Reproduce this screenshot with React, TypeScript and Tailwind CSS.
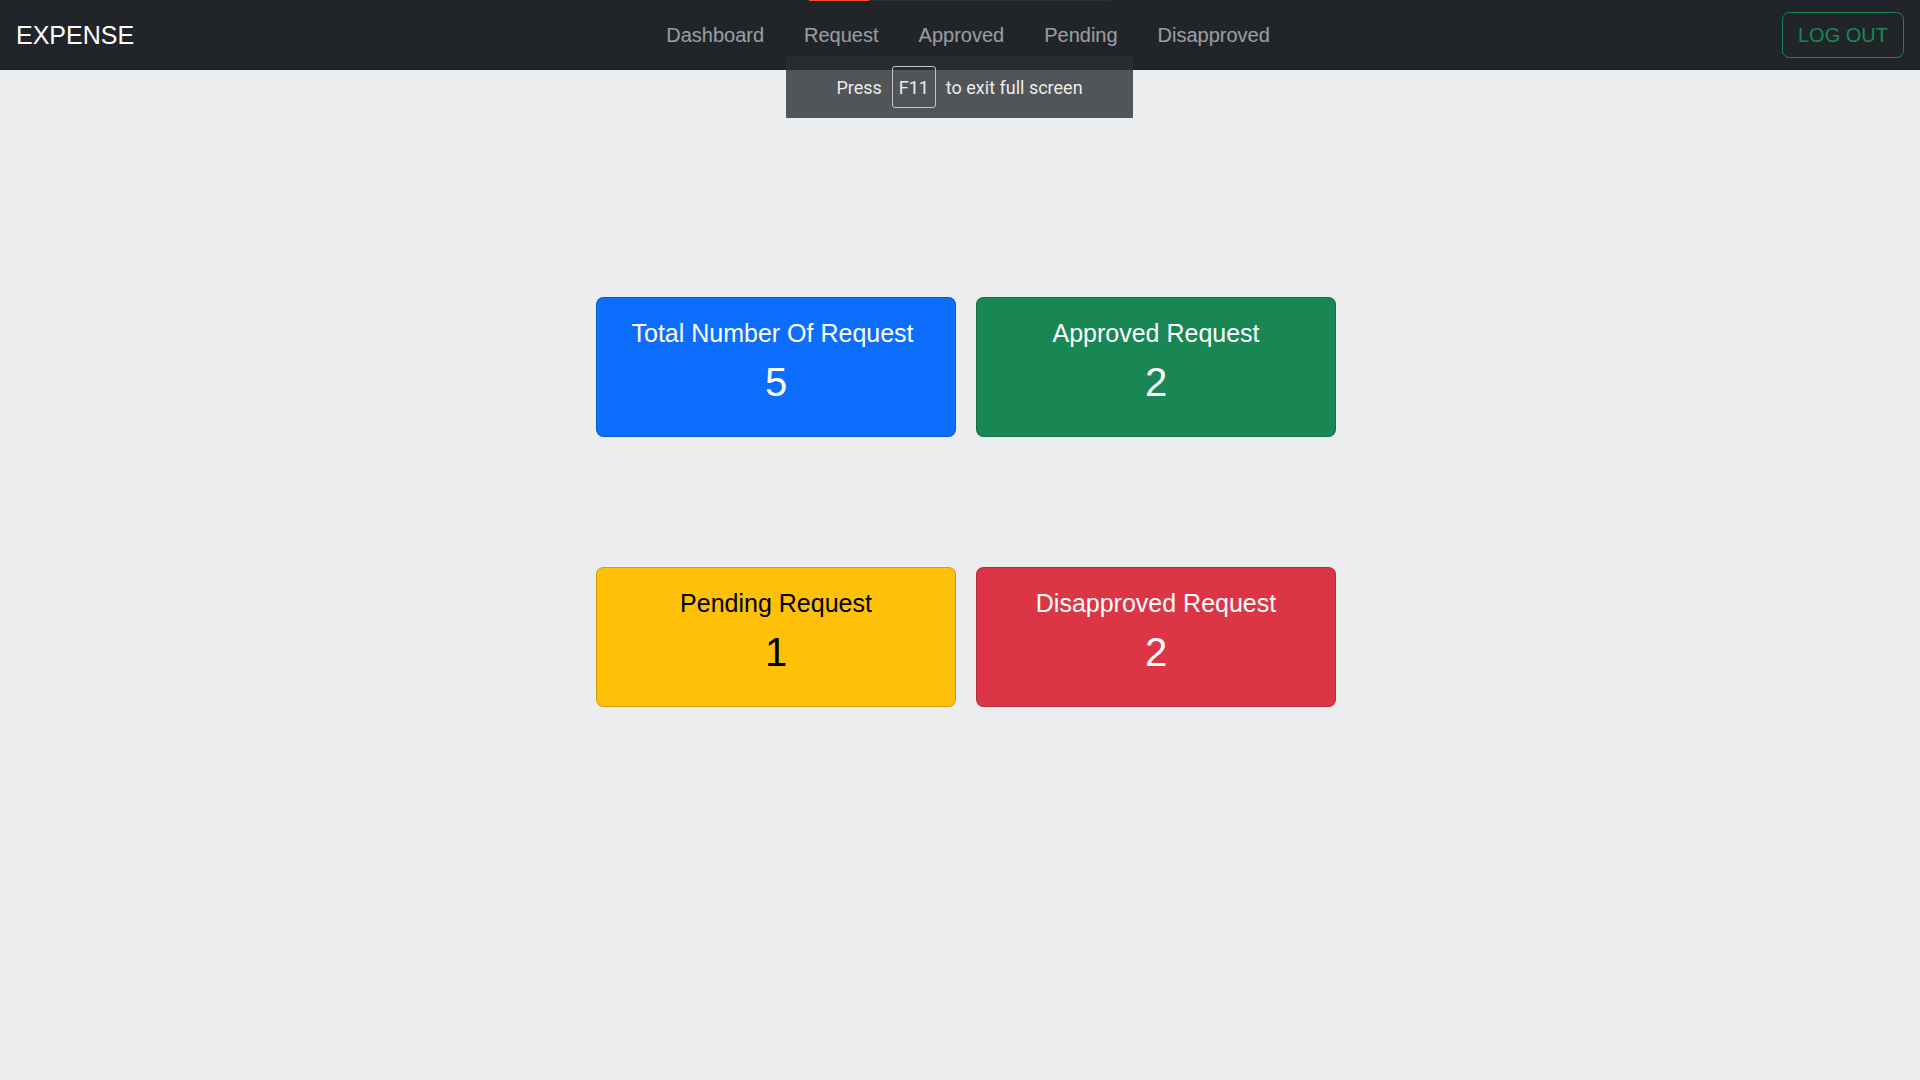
import React from "react";

const links = ["Dashboard", "Request", "Approved", "Pending", "Disapproved"];

const cards = [
  { title: "Total Number Of Request\u00a0", count: 5, cls: "bg-[#0d6efd] text-white" },
  { title: "Approved Request", count: 2, cls: "bg-[#198754] text-white" },
  { title: "Pending Request", count: 1, cls: "bg-[#ffc107] text-black" },
  { title: "Disapproved Request", count: 2, cls: "bg-[#dc3545] text-white" },
];

function Navbar() {
  return (
    <nav className="relative flex h-[70px] items-center bg-[#212529] px-4">
      <a href="#" className="mr-5 text-[25px] leading-[38px] text-white">
        EXPENSE
      </a>
      <ul className="mx-auto flex">
        {links.map((l) => (
          <li key={l}>
            <a href="#" className="block px-5 text-[20px] leading-[30px] text-white/55">
              {l}
            </a>
          </li>
        ))}
      </ul>
      <button className="rounded-[7.5px] border border-[#198754] px-[15px] py-[7px] text-[20px] leading-[30px] text-[#198754]">
        LOG OUT
      </button>
    </nav>
  );
}

function FullscreenBubble() {
  return (
    <>
      <div className="absolute left-[809px] top-0 flex h-px w-[301px]">
        <div className="w-[60px] bg-[#f4511e]" />
        <div className="flex-1 bg-[#2c2f34]" />
      </div>
      <div className="absolute left-[786px] top-[56px] flex h-[62px] w-[347px] items-center justify-center bg-[rgba(42,45,50,0.8)] font-['Roboto',sans-serif] text-[18px] text-[#ececec]">
        <span>Press</span>
        <span className="ml-[10px] mr-[10px] flex h-[42px] w-[44px] items-center justify-center rounded-[3px] border border-[#c4c4c4]">
          F11
        </span>
        <span>to exit full screen</span>
      </div>
    </>
  );
}

export default function App() {
  return (
    <div className="relative min-h-screen bg-[#ebedef] font-['Liberation_Sans',Arial,sans-serif]">
      <Navbar />
      <FullscreenBubble />
      <main className="grid grid-cols-[360px_360px] justify-center gap-x-5 gap-y-[130px] pl-3 pt-[227px]">
        {cards.map((c) => (
          <div
            key={c.title}
            className={`rounded-[7.5px] border border-black/[0.175] p-5 text-center ${c.cls}`}
          >
            <h5 className="mb-[10px] text-[25px] leading-[30px]">{c.title}</h5>
            <h2 className="mb-[10px] text-[40px] leading-[48px]">{c.count}</h2>
          </div>
        ))}
      </main>
    </div>
  );
}
